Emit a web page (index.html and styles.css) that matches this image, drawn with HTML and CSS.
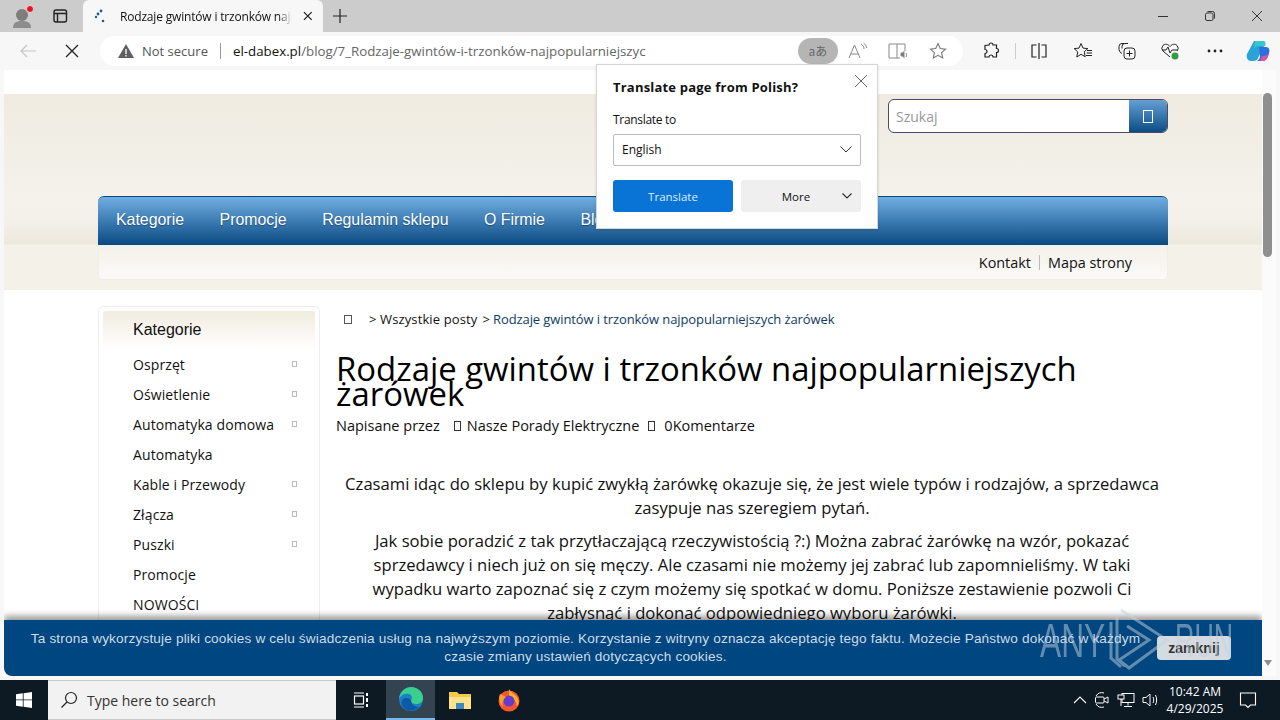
FILE: index.html
```html
<!DOCTYPE html>
<html lang="pl">

<head>
    <meta charset="UTF-8">
    <title>Rodzaje gwintów i trzonków najpopularniejszych żarówek</title>
    <link rel="stylesheet" href="styles.css">
</head>

<body>
    <!-- Browser tab strip -->
    <div class="tabstrip">
        <div class="profile">
            <svg width="24" height="26" viewBox="0 0 24 26"><circle cx="11" cy="12" r="6" fill="#7d7d7d"/><path d="M2 25c0-6 4-7 9-7s9 1 9 7z" fill="#8d8d8d"/><circle cx="19" cy="6" r="3.5" fill="#e81123" stroke="#ddd"/></svg>
        </div>
        <div class="strip-btn">
            <svg width="16" height="16" viewBox="0 0 16 16" fill="none" stroke="#222" stroke-width="1.4"><rect x="2" y="2" width="12.5" height="12" rx="2"/><path d="M2 5.5h12.5M5.5 5.5V14" /></svg>
        </div>
        <div class="tab">
            <svg class="tab-icon" width="16" height="16" viewBox="0 0 16 16" fill="#1d5d94"><circle cx="9" cy="3" r="1.4"/><circle cx="6" cy="6" r="1.4"/><circle cx="4" cy="9" r="1.2"/><circle cx="11" cy="13" r="1.3"/></svg>
            <span class="tab-title">Rodzaje gwintów i trzonków najp</span>
            <svg class="tab-close" width="12" height="12" viewBox="0 0 12 12" stroke="#222" stroke-width="1.3"><path d="M2 2l8 8M10 2l-8 8"/></svg>
        </div>
        <svg class="new-tab" width="16" height="16" viewBox="0 0 16 16" stroke="#222" stroke-width="1.2"><path d="M8 1v14M1 8h14"/></svg>
        <div class="window-btns">
            <svg width="12" height="12" viewBox="0 0 12 12" stroke="#333"><path d="M1 6.5h10"/></svg>
            <svg width="12" height="12" viewBox="0 0 12 12" fill="none" stroke="#333"><rect x="1.5" y="3" width="7.5" height="7.5" rx="1.5"/><path d="M3.5 1.5h5a2 2 0 0 1 2 2v5"/></svg>
            <svg width="12" height="12" viewBox="0 0 12 12" stroke="#333"><path d="M1 1l10 10M11 1L1 11"/></svg>
        </div>
    </div>

    <!-- Address bar row -->
    <div class="toolbar">
        <svg class="nav-back" width="18" height="16" viewBox="0 0 18 16" fill="none" stroke="#c4c4c4" stroke-width="1.2"><path d="M17 8H2M8 2L2 8l6 6"/></svg>
        <svg class="nav-stop" width="14" height="14" viewBox="0 0 14 14" stroke="#222" stroke-width="1.3"><path d="M1 1l12 12M13 1L1 13"/></svg>
        <div class="address">
            <svg class="warn" width="18" height="16" viewBox="0 0 18 16"><path d="M9 1l8 14H1z" fill="#5f5f5f"/><path d="M9 6v5M9 12v1.6" stroke="#fff" stroke-width="1.3"/></svg>
            <span class="not-secure">Not secure</span>
            <span class="addr-sep"></span>
            <span class="url"><b>el-dabex.pl</b>/blog/7_Rodzaje-gwintów-i-trzonków-najpopularniejszyc</span>
            <span class="translate-pill">aあ</span>
            <div class="addr-icon">
                <svg width="20" height="18" viewBox="0 0 20 18" fill="none" stroke="#888" stroke-width="1"><path d="M1 16L6.500 3 12 16M3 12h7M13 2c2 1 3 3 3 5M15.500 1c2 1.500 3 3 3 5"/></svg>
            </div>
            <div class="addr-icon">
                <svg width="20" height="18" viewBox="0 0 20 18" fill="none" stroke="#888" stroke-width="1"><path d="M9 2H1v14h8V2h8v7M9 16h3"/><path d="M13 11h1.500l1.500-1.500v6L14.500 14H13z" fill="#777"/><path d="M18 11c.8 1 .8 2.500 0 4"/></svg>
            </div>
            <div class="addr-icon">
                <svg width="18" height="18" viewBox="0 0 18 18" fill="none" stroke="#777" stroke-width="1.1"><path d="M9 1.500l2.300 5 5.200.6-3.900 3.500 1.100 5.400L9 13.300 4.300 16l1.100-5.400L1.500 7.100l5.200-.6z"/></svg>
            </div>
        </div>
        <div class="tool-icons">
            <svg class="tool-ext" width="18" height="18" viewBox="0 0 18 18" fill="none" stroke="#222" stroke-width="1.2"><path d="M7 3a2 2 0 0 1 4 0h3.500v3.500a2 2 0 0 1 0 4V15H11a2 2 0 0 0-4 0H3v-3.500a2 2 0 0 0 0-4V3.500z"/></svg>
            <span class="tool-sep"></span>
            <svg class="tool-split" width="18" height="18" viewBox="0 0 18 18" fill="none" stroke="#222" stroke-width="1.2"><path d="M6.500 3H2v12h4.500M11.500 3H16v12h-4.500M9 1v16"/></svg>
            <svg class="tool-fav" width="20" height="18" viewBox="0 0 20 18" fill="none" stroke="#222" stroke-width="1"><path d="M8 1.500l2 4.600 4.800.5-3.600 3.200 1 4.900L8 12.300 3.800 15l1-5-3.600-3.400L6 6.100zM14 8.500h5M13.500 11h5.500M13 13.500h6"/></svg>
            <svg class="tool-coll" width="20" height="18" viewBox="0 0 20 18" fill="none" stroke="#222" stroke-width="1"><path d="M7 1.500H5a3 3 0 0 0-3 3v3a5 5 0 0 0 3 4"/><path d="M11 1.500H8a3 3 0 0 0-3 3v2"/><rect x="7" y="6" width="11" height="11" rx="3"/><path d="M12.500 8.500v6M9.500 11.500h6"/></svg>
            <svg class="tool-health" width="20" height="18" viewBox="0 0 20 18" fill="none" stroke="#222" stroke-width="1"><path d="M10 15L3 9a4 4 0 0 1 0-5.500C5 1.500 8 2 10 4.500 12 2 15 1.500 17 3.500a4 4 0 0 1 0 5.500"/><path d="M2 8h4l2-3 2 6 2-3h5"/><circle cx="15" cy="14" r="3.500" fill="#2e9e47" stroke="none"/></svg>
            <svg class="tool-dots" width="16" height="4" viewBox="0 0 16 4" fill="#222"><circle cx="2" cy="2" r="1.400"/><circle cx="8" cy="2" r="1.400"/><circle cx="14" cy="2" r="1.400"/></svg>
            <svg class="tool-copilot" width="24" height="24" viewBox="0 0 24 24"><path d="M8 2h9c2 0 2 3 1 5l-6 12c-1 3-4 3-6 3H5C2 22 0 19 1 15z" fill="#2aa3d9"/><path d="M13 8h7c3 0 4 3 3 6-1 5-3 8-6 8h-6c2-1 3-3 3-5z" fill="#2b6fe0"/><path d="M9 2h8c3 0 3 3 2 5h-7c-2 0-3 1-4 3z" fill="#38c6c8"/><path d="M14 22h3c3 0 5-4 6-8-2 3-5 3-7 3z" fill="#e04fa8"/></svg>
        </div>
    </div>

    <!-- Web page viewport -->
    <div class="viewport">
        <div class="page">
            <div class="top-white"></div>
            <header class="site-header">
                <div class="wrap">
                    <div class="search-row">
                        <div class="search">
                            <span class="search-input">Szukaj</span>
                            <span class="search-btn"><i class="tofu tofu-search"></i></span>
                        </div>
                    </div>
                    <nav class="main-nav">
                        <a>Kategorie</a>
                        <a>Promocje</a>
                        <a>Regulamin sklepu</a>
                        <a>O Firmie</a>
                        <a>Blog</a>
                    </nav>
                    <div class="sub-nav">
                        <a>Kontakt</a>
                        <span class="sub-sep"></span>
                        <a>Mapa strony</a>
                    </div>
                </div>
            </header>

            <div class="wrap content">
                <aside class="sidebar">
                    <h3 class="side-title">Kategorie</h3>
                    <ul class="side-list">
                        <li>Osprzęt<i class="tofu tofu-small"></i></li>
                        <li>Oświetlenie<i class="tofu tofu-small"></i></li>
                        <li>Automatyka domowa<i class="tofu tofu-small"></i></li>
                        <li>Automatyka</li>
                        <li>Kable i Przewody<i class="tofu tofu-small"></i></li>
                        <li>Złącza<i class="tofu tofu-small"></i></li>
                        <li>Puszki<i class="tofu tofu-small"></i></li>
                        <li>Promocje</li>
                        <li>NOWOŚCI</li>
                    </ul>
                </aside>
                <main class="article">
                    <div class="crumbs">
                        <i class="tofu tofu-home"></i>
                        <span class="crumb-first">&gt; Wszystkie posty</span>
                        <span class="crumb-last">&gt; <a>Rodzaje gwintów i trzonków najpopularniejszych żarówek</a></span>
                    </div>
                    <h1>Rodzaje gwintów i trzonków najpopularniejszych żarówek</h1>
                    <div class="meta">
                        <span>Napisane przez</span>
                        <i class="tofu tofu-meta"></i>
                        <span>Nasze Porady Elektryczne</span>
                        <i class="tofu tofu-meta tofu-meta-last"></i>
                        <span>0Komentarze</span>
                    </div>
                    <div class="article-body">
                        <p>Czasami idąc do sklepu by kupić zwykłą żarówkę okazuje się, że jest wiele typów i rodzajów, a sprzedawca zasypuje nas szeregiem pytań.</p>
                        <p>Jak sobie poradzić z tak przytłaczającą rzeczywistością ?:) Można zabrać żarówkę na wzór, pokazać sprzedawcy i niech już on się męczy. Ale czasami nie możemy jej zabrać lub zapomnieliśmy. W taki wypadku warto zapoznać się z czym możemy się spotkać w domu. Poniższe zestawienie pozwoli Ci zabłysnąć i dokonać odpowiedniego wyboru żarówki.</p>
                    </div>
                </main>
            </div>

            <div class="cookie-bar">
                <p>Ta strona wykorzystuje pliki cookies w celu świadczenia usług na najwyższym poziomie. Korzystanie z witryny oznacza akceptację tego faktu. Możecie Państwo dokonać w każdym czasie zmiany ustawień dotyczących cookies.</p>
                <span class="cookie-close">zamknij</span>
            </div>
        </div>
        <div class="scrollbar">
            <span class="scroll-thumb"></span>
            <span class="scroll-down"></span>
        </div>
    </div>

    <!-- Windows taskbar -->
    <div class="taskbar">
        <div class="start">
            <svg width="16" height="16" viewBox="0 0 16 16" fill="#fff"><path d="M0 2.300l6.800-1V7.500H0zM7.600 1.200L16 0v7.500H7.600zM0 8.300h6.800v6.400l-6.800-1zM7.600 8.300H16V16l-8.400-1.200z"/></svg>
        </div>
        <div class="task-search">
            <svg width="18" height="18" viewBox="0 0 18 18" fill="none" stroke="#222" stroke-width="1.200"><circle cx="11" cy="7" r="5.500"/><path d="M7 11l-5.500 5.500"/></svg>
            <span>Type here to search</span>
        </div>
        <div class="task-item">
            <svg width="16" height="16" viewBox="0 0 16 16" fill="none" stroke="#fff" stroke-width="1.200"><path d="M1 1h10M1 15h10"/><rect x="1.500" y="4" width="9" height="8"/><path d="M14 1v3M14 6v4M14 12v3" stroke-width="2"/></svg>
        </div>
        <div class="task-item task-active">
            <svg width="26" height="26" viewBox="0 0 26 26"><circle cx="13" cy="13" r="12" fill="#1a7fc9"/><path d="M1 13C2 5 8 1 13 1c7 0 12 5 12 11 0 4-3 6-7 6-3 0-5-1-5-3 0-1 1-2 1-3 0-3-3-5-6-4-3 0-6 2-7 5z" fill="#38cf8f"/><path d="M5 13c3-2 7-1 8 2 1 4 4 6 8 6-4 4-11 5-15 1-3-3-3-7-1-9z" fill="#0c59a4"/></svg>
        </div>
        <div class="task-item task-folder">
            <svg width="24" height="22" viewBox="0 0 24 22"><path d="M1 3h8l2 2h12v15H1z" fill="#f2c94c"/><path d="M1 8h22v12H1z" fill="#ffe28a"/><rect x="8" y="14" width="8" height="6" fill="#3f88c5"/></svg>
        </div>
        <div class="task-item">
            <svg width="24" height="24" viewBox="0 0 24 24"><circle cx="12" cy="13" r="10.500" fill="#f5572b"/><path d="M12 1c1 3 5 4 8 8 2 3 2 7 0 9-1-6-5-9-8-10z" fill="#fdb12c"/><circle cx="12" cy="13" r="5.500" fill="#6a3ad0"/><path d="M3 6c-2 5 0 10 3 13-1-4 0-8 3-10z" fill="#f9a12b"/></svg>
        </div>
        <div class="tray">
            <svg class="tray-icon" width="14" height="8" viewBox="0 0 14 8" fill="none" stroke="#fff" stroke-width="1.100"><path d="M1 7l6-6 6 6"/></svg>
            <svg class="tray-icon" width="16" height="18" viewBox="0 0 16 18" fill="none" stroke="#fff"><path d="M2 5a7 7 0 0 1 8-3M2 13a7 7 0 0 0 8 3"/><rect x="1.500" y="6" width="8.500" height="6" rx="1"/><path d="M10 8l4-2v6l-4-2"/></svg>
            <svg class="tray-icon" width="18" height="16" viewBox="0 0 18 16" fill="none" stroke="#fff"><rect x="5" y="1.500" width="12" height="9"/><rect x="1" y="3" width="6" height="4" fill="#0d1a24"/><path d="M11 10.500v3M7 14.500h8M4 7v7"/></svg>
            <svg class="tray-icon tray-last" width="17" height="16" viewBox="0 0 17 16" fill="none" stroke="#fff"><path d="M1 5.500h3L8 2v12l-4-3.500H1zM11 5c1 2 1 4 0 6M13.500 3c1.500 3 1.500 7 0 10"/></svg>
            <div class="clock">
                <span>10:42 AM</span>
                <span>4/29/2025</span>
            </div>
            <svg class="notify" width="18" height="18" viewBox="0 0 18 18" fill="none" stroke="#fff" stroke-width="1.100"><path d="M1.500 2h15v12h-5l-2.500 2.500L6.500 14h-5z"/></svg>
        </div>
    </div>

    <!-- Translate popup -->
    <div class="translate-pop">
        <svg class="pop-close" width="14" height="14" viewBox="0 0 14 14" stroke="#666"><path d="M1 1l12 12M13 1L1 13"/></svg>
        <div class="pop-title">Translate page from Polish?</div>
        <div class="pop-label">Translate to</div>
        <div class="pop-select">
            <span>English</span>
            <svg width="12" height="7" viewBox="0 0 12 7" fill="none" stroke="#333"><path d="M.500.500L6 6l5.500-5.500"/></svg>
        </div>
        <div class="pop-actions">
            <span class="pop-primary">Translate</span>
            <span class="pop-more">More
                <svg width="10" height="6" viewBox="0 0 10 6" fill="none" stroke="#333" stroke-width="1.200"><path d="M.500.500L5 5 9.500.500"/></svg>
            </span>
        </div>
    </div>

    <!-- Screen recorder watermark -->
    <div class="watermark">
        <span>ANY</span>
        <svg width="62" height="64" viewBox="0 0 62 64" fill="none" stroke="#c8d2dc" stroke-width="3"><path d="M2 14v36l10 9M8 9v42l8 7M12 2l46 30-38 28-10-8 30-20-22-14"/></svg>
        <span class="watermark-run">RUN</span>
    </div>
</body>

</html>
```

FILE: styles.css
```css
* {
    box-sizing: border-box;
}

body {
    margin: 0;
    width: 1280px;
    height: 720px;
    overflow: hidden;
    position: relative;
    background: #f7f7f7;
    font-family: "Open Sans", sans-serif;
    color: #111;
}

/* browser chrome */
.tabstrip {
    height: 32px;
    background: #cccccc;
    display: flex;
    align-items: center;
}

.profile {
    width: 44px;
    padding-left: 11px;
    display: flex;
}

.strip-btn {
    width: 32px;
    padding-left: 8px;
    display: flex;
}

.tab {
    width: 240px;
    height: 32px;
    margin-left: 7px;
    padding: 0 9px;
    background: #f7f7f7;
    border-radius: 6px 6px 0 0;
    display: flex;
    align-items: center;
}

.tab-icon {
    flex: none;
}

.tab-title {
    width: 178px;
    margin-left: 12px;
    font-size: 12px;
    letter-spacing: -0.18px;
    white-space: nowrap;
    overflow: hidden;
    color: #111;
    -webkit-mask-image: linear-gradient(90deg, #000 92%, transparent);
    mask-image: linear-gradient(90deg, #000 92%, transparent);
}

.tab-close {
    margin-left: 10px;
}

.new-tab {
    margin-left: 9px;
}

.window-btns {
    margin-left: auto;
    display: flex;
    gap: 35px;
    padding-right: 17px;
}

.toolbar {
    height: 38px;
    background: #f7f7f7;
    display: flex;
    align-items: center;
    position: relative;
}

.nav-back {
    margin-left: 19px;
}

.nav-stop {
    margin-left: 28px;
}

.address {
    width: 863px;
    height: 30px;
    margin-left: 21px;
    padding-left: 17px;
    background: #fff;
    border-radius: 15px;
    display: flex;
    align-items: center;
}

.not-secure {
    margin-left: 7px;
    font-size: 13px;
    color: #555;
}

.addr-sep {
    width: 1px;
    height: 16px;
    background: #999;
    margin: 0 12px;
}

.url {
    width: 565px;
    font-size: 13.3px;
    color: #666;
    white-space: nowrap;
    overflow: hidden;
}

.url b {
    font-weight: 400;
    color: #111;
}

.translate-pill {
    width: 40px;
    height: 26px;
    border-radius: 13px;
    background: #b5b5b5;
    font-size: 12px;
    color: #666;
    text-align: center;
    line-height: 26px;
    font-family: "Noto Sans CJK JP", "Open Sans", sans-serif;
}

.addr-icon {
    width: 40px;
    display: flex;
    justify-content: center;
}

.tool-icons {
    margin-left: 19px;
    display: flex;
    align-items: center;
}

.tool-sep {
    width: 1px;
    height: 16px;
    background: #ccc;
    margin: 0 15px;
}

.tool-split {
    margin-right: 25px;
    margin-left: -1px;
}

.tool-fav {
    margin-right: 24px;
}

.tool-coll {
    margin-right: 23px;
}

.tool-health {
    margin-right: 27px;
}

.tool-dots {
    margin-right: 23px;
}

/* page */
.viewport {
    height: 606px;
    margin-left: 4px;
    width: 1272px;
    display: flex;
    background: #fff;
}

.page {
    width: 1258px;
    height: 606px;
    position: relative;
    overflow: hidden;
    border-radius: 6px 0 0 6px;
    background: #fff;
}

.top-white {
    height: 24px;
}

.site-header {
    height: 196px;
    background: linear-gradient(#efebe0, #f5f2ec 55%, #f3f0e8 65%, #ece8dc 76.500%, #f4f1e9 77%, #f4f1e9);
}

.wrap {
    width: 1070px;
    margin-left: 94px;
}

.search-row {
    padding-top: 5px;
    display: flex;
    justify-content: flex-end;
}

.search {
    width: 280px;
    height: 34px;
    display: flex;
    border: 1px solid #4c4a66;
    border-radius: 6px;
    overflow: hidden;
    background: #fff;
}

.search-input {
    flex: 1;
    padding-left: 7px;
    font-size: 14px;
    line-height: 33px;
    color: #999;
}

.search-btn {
    width: 38px;
    background: linear-gradient(#659fd4, #0c4c85);
    display: flex;
    align-items: center;
    justify-content: center;
}

.tofu {
    display: inline-block;
    border: 1px solid #333;
}

.tofu-search {
    width: 10px;
    height: 13px;
    border-color: #fff;
}

.main-nav {
    height: 49px;
    margin-top: 63px;
    padding: 0 0 2px 18px;
    display: flex;
    align-items: center;
    gap: 35.5px;
    border-top: 1px solid #0b4a7c;
    border-radius: 6px 6px 0 0;
    background: linear-gradient(#70aee2, #0a4a82);
}

.main-nav a {
    font-family: "Liberation Sans", sans-serif;
    font-size: 15.9px;
    color: #fff;
    text-shadow: 0 1px 1px #1c4a75;
}

.sub-nav {
    height: 35px;
    padding-right: 35px;
    display: flex;
    align-items: center;
    justify-content: flex-end;
    border-radius: 0 0 5px 5px;
    border: 1px solid #f0ede5;
    border-top: none;
    background: linear-gradient(#f4f1e9, #fbfaf7);
    font-size: 14.4px;
}

.sub-sep {
    width: 1px;
    height: 15px;
    background: #bbb;
    margin: 0 8px;
}

.content {
    display: flex;
    padding-top: 16px;
}

.sidebar {
    width: 222px;
    height: 330px;
    padding: 4px;
    flex: none;
    border: 1px solid #eee;
    border-radius: 5px;
}

.side-title {
    height: 38px;
    margin: 0;
    padding: 10px 0 0 30px;
    font-family: "Liberation Sans", sans-serif;
    font-size: 16px;
    font-weight: 400;
    border-radius: 3px 3px 0 0;
    background: linear-gradient(#f1ecdf, #fff);
}

.side-list {
    margin: 0;
    padding: 0 0 0 30px;
    list-style: none;
}

.side-list li {
    height: 30px;
    display: flex;
    align-items: center;
    font-size: 14px;
    letter-spacing: 0.1px;
    position: relative;
}

.tofu-small {
    position: absolute;
    left: 159px;
    top: 12px;
    width: 5px;
    height: 6px;
    border-color: #bbb;
}

.article {
    width: 832px;
    margin-left: 16px;
}

.crumbs {
    height: 26px;
    display: flex;
    align-items: center;
    font-size: 13px;
}

.tofu-home {
    width: 8px;
    height: 9px;
    margin-left: 8px;
    border-color: #555;
}

.crumb-first {
    margin-left: 17px;
    letter-spacing: 0.12px;
}

.crumb-last {
    margin-left: 5px;
    letter-spacing: -0.1px;
}

.crumb-last a {
    color: #0d3c63;
}

.article h1 {
    margin: 24px 0 0;
    font-size: 32.9px;
    font-weight: 400;
    line-height: 25px;
    color: #000;
}

.meta {
    margin-top: 10px;
    display: flex;
    align-items: center;
    font-size: 14.5px;
}

.tofu-meta {
    width: 7px;
    height: 10px;
    margin: 0 6px 0 14px;
}

.tofu-meta-last {
    margin: 0 9px;
}

.article-body {
    margin-top: 37px;
    padding: 0 6px;
    text-align: center;
    font-size: 16.65px;
    line-height: 24.3px;
    color: #111;
}

.article-body p {
    margin: 0 0 8px;
}

.cookie-bar {
    position: absolute;
    left: 0;
    bottom: 0;
    width: 1258px;
    height: 56px;
    padding: 10px 115px 0 20px;
    background: #004680;
    border-radius: 0 0 0 8px;
    box-shadow: 0 -4px 6px rgba(0, 0, 0, 0.4);
}

.cookie-bar p {
    margin: 0;
    font-family: "Liberation Sans", sans-serif;
    font-size: 13.6px;
    line-height: 18px;
    letter-spacing: 0.17px;
    text-align: center;
    color: #cfdbe6;
}

.cookie-close {
    position: absolute;
    left: 1153px;
    top: 16px;
    width: 74px;
    height: 24px;
    border-radius: 4px;
    background: rgba(235, 235, 235, 0.9);
    font-family: "Liberation Sans", sans-serif;
    font-size: 14px;
    font-weight: 700;
    line-height: 24px;
    text-align: center;
    color: #333;
}

.scrollbar {
    width: 14px;
    position: relative;
    background: #fbfbfb;
}

.scroll-thumb {
    position: absolute;
    left: 1px;
    top: 23px;
    width: 9px;
    height: 164px;
    border-radius: 5px;
    background: #8f8f8f;
}

.scroll-down {
    position: absolute;
    left: 2px;
    top: 590px;
    border: 4px solid transparent;
    border-top: 6px solid #8f8f8f;
}

/* taskbar */
.taskbar {
    position: absolute;
    left: 0;
    bottom: 0;
    width: 1280px;
    height: 40px;
    background: #0d1a24;
    display: flex;
    align-items: center;
}

.start {
    width: 48px;
    display: flex;
    justify-content: center;
}

.task-search {
    width: 288px;
    height: 40px;
    padding-left: 12px;
    background: #f2f2f2;
    border: 1px solid #c9c9c9;
    border-width: 1px 0;
    display: flex;
    align-items: center;
    gap: 9px;
    font-size: 14px;
    color: #333;
}

.task-item {
    width: 50px;
    height: 40px;
    display: flex;
    align-items: center;
    justify-content: center;
}

.task-active {
    width: 49px;
    background: #33434f;
    border-bottom: 2px solid #76b9ed;
}

.task-folder {
    width: 49px;
}

.tray {
    margin-left: auto;
    display: flex;
    align-items: center;
}

.tray-icon {
    margin-right: 7px;
}

.tray-last {
    margin-right: 0;
}

.clock {
    width: 72px;
    display: flex;
    flex-direction: column;
    align-items: center;
    font-size: 12px;
    line-height: 17px;
    color: #fff;
}

.notify {
    margin: 0 23px 0 8px;
}

/* translate popup over the page */
.translate-pop {
    position: absolute;
    left: 596px;
    top: 64px;
    width: 282px;
    height: 165px;
    padding: 14px 16px;
    background: #fff;
    border: 1px solid #d6d6d6;
    box-shadow: 0 1px 3px rgba(0, 0, 0, 0.12);
}

.pop-close {
    position: absolute;
    right: 9px;
    top: 9px;
}

.pop-title {
    font-size: 13px;
    font-weight: 700;
    letter-spacing: 0.2px;
    line-height: 16px;
}

.pop-label {
    margin-top: 17px;
    font-size: 12px;
    letter-spacing: -0.3px;
    line-height: 16px;
}

.pop-select {
    height: 32px;
    margin-top: 6px;
    padding: 0 8px 2px;
    border: 1px solid #bbb;
    border-radius: 2px;
    display: flex;
    align-items: center;
    justify-content: space-between;
    font-size: 12px;
}

.pop-actions {
    margin-top: 14px;
    display: flex;
    gap: 8px;
}

.pop-primary,
.pop-more {
    width: 120px;
    height: 32px;
    border-radius: 3px;
    display: flex;
    align-items: center;
    justify-content: center;
    font-size: 11.5px;
}

.pop-primary {
    background: #0a74d6;
    color: #dcecfa;
}

.pop-more {
    padding-right: 10px;
    background: #efefef;
    position: relative;
}

.pop-more svg {
    position: absolute;
    right: 9px;
    top: 13px;
}

/* watermark */
.watermark {
    position: absolute;
    left: 1040px;
    top: 608px;
    display: flex;
    align-items: center;
    gap: 4px;
    font-family: "Liberation Sans", sans-serif;
    font-size: 48px;
    color: #c8d2dc;
    opacity: 0.5;
    pointer-events: none;
}

.watermark span {
    display: inline-block;
    width: 65px;
    white-space: nowrap;
    transform: scaleX(0.66);
    transform-origin: left center;
}

.watermark .watermark-run {
    width: 55px;
    transform: scaleX(0.56);
}
```
